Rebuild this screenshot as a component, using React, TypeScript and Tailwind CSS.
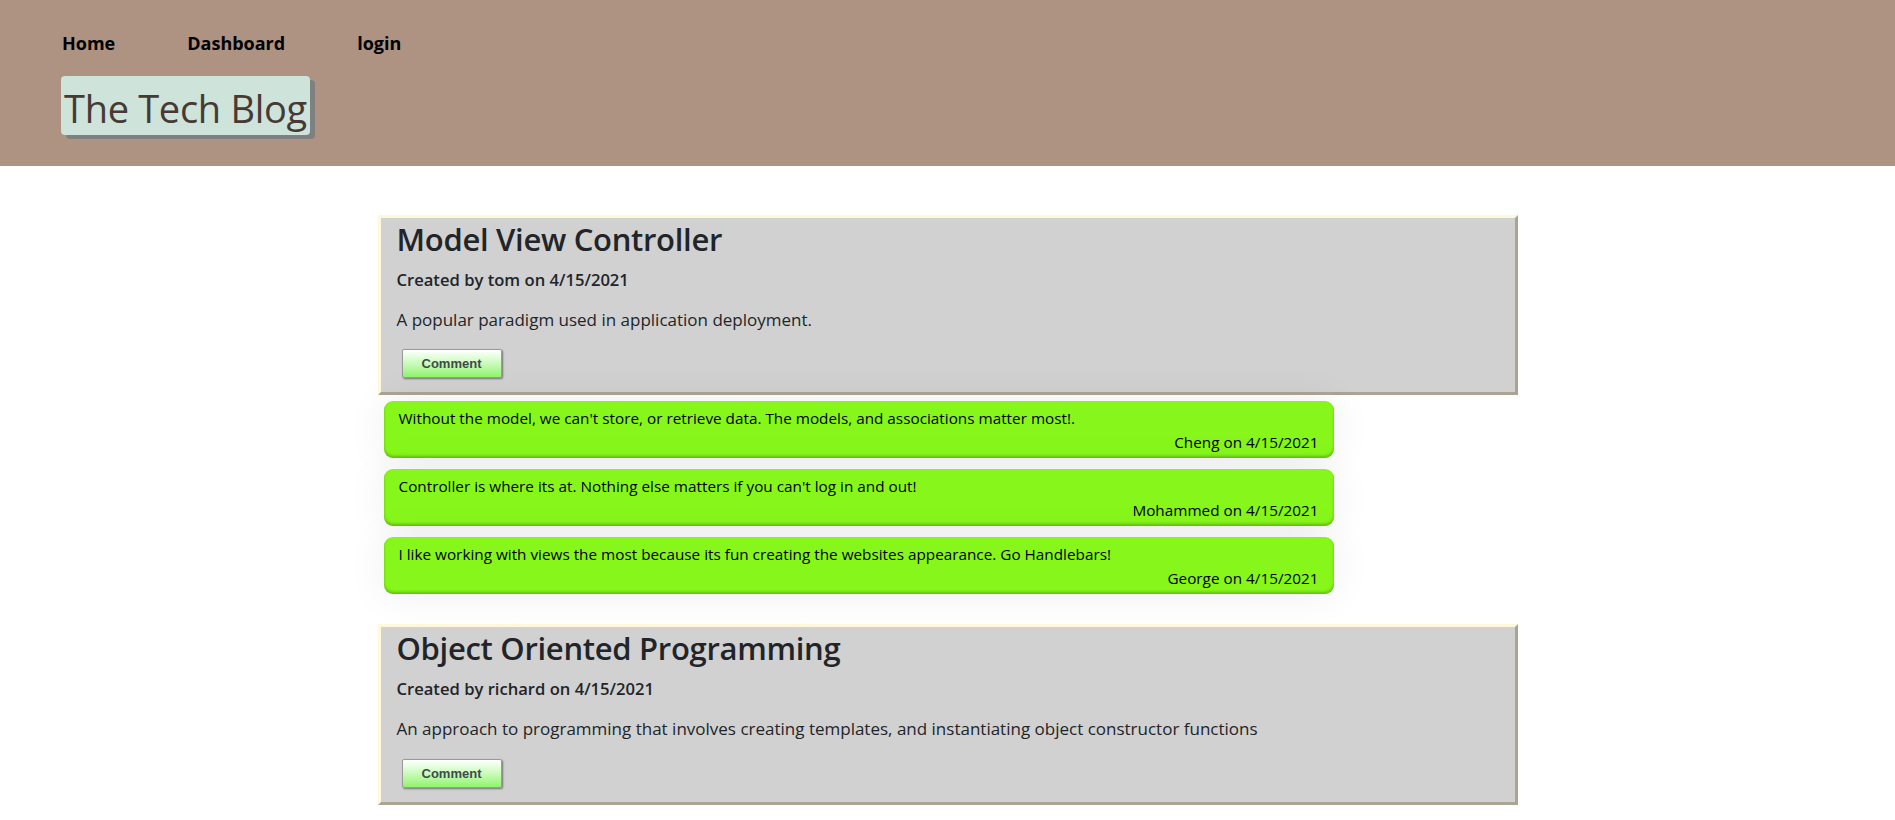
const posts = [
  {
    title: "Model View Controller",
    author: "tom",
    date: "4/15/2021",
    body: "A popular paradigm used in application deployment.",
    comments: [
      {
        text: "Without the model, we can't store, or retrieve data. The models, and associations matter most!.",
        user: "Cheng",
        date: "4/15/2021",
      },
      {
        text: "Controller is where its at. Nothing else matters if you can't log in and out!",
        user: "Mohammed",
        date: "4/15/2021",
      },
      {
        text: "I like working with views the most because its fun creating the websites appearance. Go Handlebars!",
        user: "George",
        date: "4/15/2021",
      },
    ],
  },
  {
    title: "Object Oriented Programming",
    author: "richard",
    date: "4/15/2021",
    body: "An approach to programming that involves creating templates, and instantiating object constructor functions",
    comments: [],
  },
];

function PostCard({ post }: { post: (typeof posts)[number] }) {
  return (
    <div className="w-[1140px] bg-[#d1d1d1] border-[3px] border-t-[#fff8dc] border-l-[#fff8dc] border-r-[#aaa593] border-b-[#aaa593] px-4 pt-[2px] pb-[14px] text-[#212529]">
      <h2 className="text-[31px] leading-[38px] font-semibold tracking-[-0.3px]">{post.title}</h2>
      <h5 className="mt-[11px] text-[16.6px] leading-[21px] font-semibold">
        Created by {post.author} on {post.date}
      </h5>
      <p className="mt-[17px] text-[17px] leading-[26.4px]">{post.body}</p>
      <button className="mt-[16px] ml-[5px] w-[100px] h-[29px] rounded-[2px] border border-[#9a9a9a] bg-gradient-to-b from-white to-[#8ef46a] shadow-[1px_1px_2px_rgba(0,0,0,0.45)] text-[13px] font-bold text-[#3e4a4c] font-['Liberation_Sans',Arial,sans-serif]">
        Comment
      </button>
    </div>
  );
}

function Comment({ c }: { c: { text: string; user: string; date: string } }) {
  return (
    <div className="w-[950px] rounded-[9px] bg-[#87f71b] pt-[5px] pb-[4px] px-[15px] text-[15.3px] leading-[24px] text-black shadow-[inset_0_-2px_3px_rgba(70,140,0,0.55),0_0_40px_rgba(30,30,70,0.07)]">
      <p>{c.text}</p>
      <p className="text-right">
        {c.user} on {c.date}
      </p>
    </div>
  );
}

export default function App() {
  return (
    <div className="min-h-screen bg-white font-['Open_Sans','Noto_Sans',sans-serif]">
      <header className="bg-[#ae9382] px-[62px] pt-[30px] pb-[31px]">
        <nav className="flex gap-[72px] text-[18px] leading-[27px] font-bold text-black">
          <a href="#">Home</a>
          <a href="#">Dashboard</a>
          <a href="#">login</a>
        </nav>
        <div className="mt-[19px] -ml-px inline-block rounded-[4px] bg-[#cee3da] px-[3px] pt-[8px] pb-[3px] shadow-[5px_4px_0_#808080]">
          <h1 className="text-[38px] leading-[48px] tracking-[-0.3px] text-[#463a36]">The Tech Blog</h1>
        </div>
      </header>

      <main className="w-[1140px] mx-auto pt-[49px] pb-4 flex flex-col">
        {posts.map((post, i) => (
          <div key={i} className={i > 0 ? "mt-[30px]" : ""}>
            <PostCard post={post} />
            {post.comments.length > 0 && (
              <div className="mt-[6px] ml-[6px] flex flex-col gap-[11px]">
                {post.comments.map((c, j) => (
                  <Comment key={j} c={c} />
                ))}
              </div>
            )}
          </div>
        ))}
      </main>
    </div>
  );
}
